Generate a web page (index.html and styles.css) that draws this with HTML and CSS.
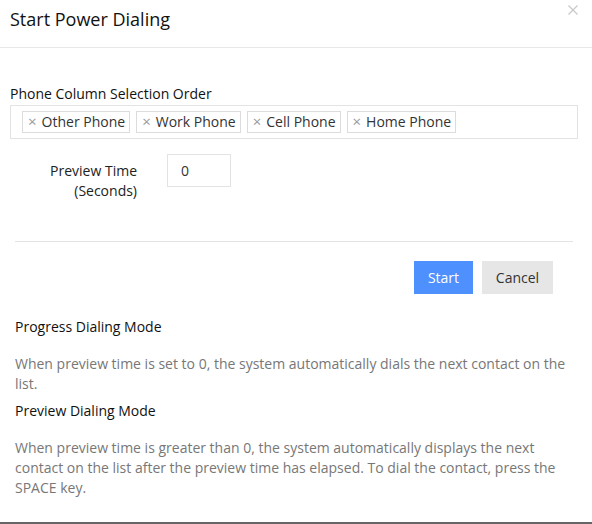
FILE: index.html
```html
<!DOCTYPE html>
<html lang="en">
<head>
    <meta charset="UTF-8">
    <meta name="viewport" content="width=device-width, initial-scale=1.0">
    <title>Start Power Dialing</title>

    <link rel="stylesheet" href="styles.css">
</head>
<body>
  <div class="modal">
    <div class="modal-header">
      <h1>Start Power Dialing</h1>
      <button class="close" aria-label="Close">
        <svg width="10" height="10" viewBox="0 0 10 10"><path d="M0.5 0.5 L9.5 9.5 M9.5 0.5 L0.5 9.5" stroke="#c8c8c8" stroke-width="1.2" fill="none"/></svg>
      </button>
    </div>

    <div class="modal-body">
      <label class="field-label">Phone Column Selection Order</label>
      <div class="tags">
        <span class="tag"><span class="tag-x">&times;</span>Other Phone</span>
        <span class="tag"><span class="tag-x">&times;</span>Work Phone</span>
        <span class="tag"><span class="tag-x">&times;</span>Cell Phone</span>
        <span class="tag"><span class="tag-x">&times;</span>Home Phone</span>
      </div>

      <div class="preview-row">
        <label class="preview-label">Preview Time<br>(Seconds)</label>
        <input type="text" class="preview-input" value="0">
      </div>
    </div>

    <div class="divider"></div>

    <div class="actions">
      <button class="btn btn-start">Start</button>
      <button class="btn btn-cancel">Cancel</button>
    </div>

    <div class="help">
      <h3>Progress Dialing Mode</h3>
      <p>When preview time is set to 0, the system automatically dials the next contact on the list.</p>
      <h3 class="second">Preview Dialing Mode</h3>
      <p>When preview time is greater than 0, the system automatically displays the next contact on the list after the preview time has elapsed. To dial the contact, press the SPACE key.</p>
    </div>
  </div>
</body>
</html>
```

FILE: styles.css
```css
*{
  margin: 0;
  padding: 0;
  box-sizing: border-box;
}

body{
  background-color: white;
  font-family: "Open Sans", Arial, sans-serif;
  font-size: 14px;
  color: #222;
}

.modal{
  position: relative;
  width: 592px;
  height: 524px;
  border-bottom: 2px solid #666;
}

.modal-header{
  height: 48px;
  padding: 7px 10px 0 10px;
  border-bottom: 1px solid #e8e8e8;
}

h1{
  font-size: 18px;
  font-weight: 400;
  line-height: 25px;
  color: #111;
}

.close{
  position: absolute;
  top: 5px;
  right: 14px;
  width: 10px;
  height: 10px;
  border: none;
  background: none;
  cursor: pointer;
}

.close svg{
  display: block;
}

.modal-body{
  padding: 36px 14px 0 10px;
}

.field-label{
  display: block;
  line-height: 20px;
  color: #111;
}

.tags{
  height: 34px;
  margin-top: 1px;
  padding: 5px 11px;
  border: 1px solid #e3e3e3;
  display: flex;
  gap: 6px;
}

.tag{
  height: 22px;
  padding: 0 4px 0 5px;
  border: 1px solid #dcdcdc;
  line-height: 20px;
  color: #333;
  white-space: nowrap;
}

.tag-x{
  font-size: 15px;
  line-height: 1;
  color: #999;
  margin-right: 5px;
}

.preview-row{
  display: flex;
  margin-top: 15px;
  gap: 30px;
}

.preview-label{
  width: 127px;
  padding-top: 7px;
  text-align: right;
  line-height: 20px;
  color: #222;
}

.preview-input{
  width: 64px;
  height: 33px;
  padding-left: 13px;
  border: 1px solid #e3e3e3;
  font-family: "Open Sans", Arial, sans-serif;
  font-size: 14px;
  color: #333;
  outline: none;
}

.divider{
  margin: 40px 19px 0 15px;
  border-top: 1px solid #e3e3e3;
}

.actions{
  display: flex;
  justify-content: flex-end;
  gap: 9px;
  padding-right: 39px;
  margin-top: 19px;
}

.btn{
  height: 33px;
  border: none;
  font-family: "Open Sans", Arial, sans-serif;
  font-size: 14px;
  cursor: pointer;
}

.btn-start{
  width: 59px;
  background-color: #4d90fe;
  color: white;
}

.btn-cancel{
  width: 71px;
  background-color: #e6e6e6;
  color: #333;
}

.help{
  padding: 23px 15px 0 15px;
}

h3{
  font-size: 14px;
  font-weight: 400;
  line-height: 20px;
  color: #111;
}

.help p{
  margin-top: 17px;
  line-height: 20px;
  color: #777;
}

.help .second{
  margin-top: 7px;
}
```
